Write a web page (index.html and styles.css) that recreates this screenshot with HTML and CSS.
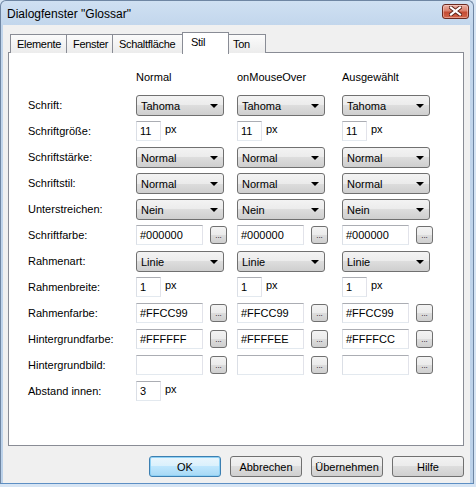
FILE: index.html
```html
<!DOCTYPE html>
<html lang="de">
<head>
<meta charset="utf-8">
<title>Dialogfenster "Glossar"</title>
<link rel="stylesheet" href="styles.css">
</head>
<body>
<div class="window">
  <div class="titlebar">
    <span class="title">Dialogfenster "Glossar"</span>
    <div class="close" aria-label="Schließen">
      <svg width="13" height="10" viewBox="0 0 13 10"><path d="M2 1.5 L11 8.5 M11 1.5 L2 8.5" stroke="#5a2016" stroke-width="4" stroke-linecap="square" fill="none"/><path d="M2 1.5 L11 8.5 M11 1.5 L2 8.5" stroke="#ffffff" stroke-width="2.2" stroke-linecap="square" fill="none"/></svg>
    </div>
  </div>
  <div class="client">
    <div class="tabs">
      <div class="tab tab-elemente">Elemente</div>
      <div class="tab tab-fenster">Fenster</div>
      <div class="tab tab-schalt">Schaltfläche</div>
      <div class="tab tab-stil active">Stil</div>
      <div class="tab tab-ton">Ton</div>
    </div>
    <div class="panel">
      <div class="grid">
        <div></div>
        <div class="head">Normal</div>
        <div class="head">onMouseOver</div>
        <div class="head">Ausgewählt</div>

        <div class="label">Schrift:</div>
        <div><div class="combo">Tahoma</div></div>
        <div><div class="combo">Tahoma</div></div>
        <div><div class="combo">Tahoma</div></div>

        <div class="label">Schriftgröße:</div>
        <div class="unit"><div class="field small">11</div><span class="px">px</span></div>
        <div class="unit"><div class="field small">11</div><span class="px">px</span></div>
        <div class="unit"><div class="field small">11</div><span class="px">px</span></div>

        <div class="label">Schriftstärke:</div>
        <div><div class="combo">Normal</div></div>
        <div><div class="combo">Normal</div></div>
        <div><div class="combo">Normal</div></div>

        <div class="label">Schriftstil:</div>
        <div><div class="combo">Normal</div></div>
        <div><div class="combo">Normal</div></div>
        <div><div class="combo">Normal</div></div>

        <div class="label">Unterstreichen:</div>
        <div><div class="combo">Nein</div></div>
        <div><div class="combo">Nein</div></div>
        <div><div class="combo">Nein</div></div>

        <div class="label">Schriftfarbe:</div>
        <div class="pair"><div class="field wide">#000000</div><div class="dots">...</div></div>
        <div class="pair"><div class="field wide">#000000</div><div class="dots">...</div></div>
        <div class="pair"><div class="field wide">#000000</div><div class="dots">...</div></div>

        <div class="label">Rahmenart:</div>
        <div><div class="combo">Linie</div></div>
        <div><div class="combo">Linie</div></div>
        <div><div class="combo">Linie</div></div>

        <div class="label">Rahmenbreite:</div>
        <div class="unit"><div class="field small">1</div><span class="px">px</span></div>
        <div class="unit"><div class="field small">1</div><span class="px">px</span></div>
        <div class="unit"><div class="field small">1</div><span class="px">px</span></div>

        <div class="label">Rahmenfarbe:</div>
        <div class="pair"><div class="field wide">#FFCC99</div><div class="dots">...</div></div>
        <div class="pair"><div class="field wide">#FFCC99</div><div class="dots">...</div></div>
        <div class="pair"><div class="field wide">#FFCC99</div><div class="dots">...</div></div>

        <div class="label">Hintergrundfarbe:</div>
        <div class="pair"><div class="field wide">#FFFFFF</div><div class="dots">...</div></div>
        <div class="pair"><div class="field wide">#FFFFEE</div><div class="dots">...</div></div>
        <div class="pair"><div class="field wide">#FFFFCC</div><div class="dots">...</div></div>

        <div class="label">Hintergrundbild:</div>
        <div class="pair"><div class="field wide"></div><div class="dots">...</div></div>
        <div class="pair"><div class="field wide"></div><div class="dots">...</div></div>
        <div class="pair"><div class="field wide"></div><div class="dots">...</div></div>

        <div class="label">Abstand innen:</div>
        <div class="unit"><div class="field small">3</div><span class="px">px</span></div>
        <div></div>
        <div></div>
      </div>
    </div>
    <div class="buttons">
      <div class="btn default">OK</div>
      <div class="btn">Abbrechen</div>
      <div class="btn">Übernehmen</div>
      <div class="btn">Hilfe</div>
    </div>
  </div>
</div>
</body>
</html>
```
FILE: styles.css
```css
html, body {
  margin: 0;
  padding: 0;
}
body {
  width: 476px;
  height: 487px;
  overflow: hidden;
  background: #d7e5f4;
  font-family: "Liberation Sans", Arial, sans-serif;
  font-size: 11px;
  color: #000;
}
.window {
  box-sizing: border-box;
  width: 474px;
  height: 484px;
  border: 1px solid #6f86a3;
  border-bottom-color: #5d8fc4;
  border-radius: 6px 6px 0 0;
  background: linear-gradient(#cfe0f2 0px, #c2d6ec 25px, #bcd2ea 100%);
  display: flex;
  flex-direction: column;
}
.titlebar {
  height: 24px;
  display: flex;
  align-items: center;
  justify-content: space-between;
  padding: 0 4px 0 6px;
}
.title {
  font-size: 12px;
  color: #000;
  margin-top: 1px;
}
.close {
  box-sizing: border-box;
  width: 27px;
  height: 15px;
  margin-top: -4px;
  border: 1px solid #6b2a20;
  border-radius: 3px;
  background: linear-gradient(#eab0a3 0%, #d9806d 45%, #c44b33 55%, #d2654b 100%);
  box-shadow: inset 0 0 0 1px rgba(255, 220, 210, 0.45);
  display: flex;
  align-items: center;
  justify-content: center;
}
.client {
  flex: 1;
  margin: 0 3px 0 2px;
  background: #f0f0f0;
  display: flex;
  flex-direction: column;
}
.tabs {
  height: 27px;
  display: flex;
  align-items: flex-end;
  padding-left: 7px;
  position: relative;
  z-index: 1;
}
.tab {
  box-sizing: border-box;
  height: 19px;
  margin-bottom: -1px;
  margin-left: -1px;
  padding: 3px 0 0 6px;
  border: 1px solid #898c95;
  border-bottom: none;
  background: linear-gradient(#fbfbfb, #ececec);
  line-height: 13px;
  letter-spacing: -0.3px;
  white-space: nowrap;
  overflow: hidden;
}
.tab:first-child {
  margin-left: 0;
}
.tab-elemente {
  width: 57px;
}
.tab-fenster {
  width: 47px;
}
.tab-schalt {
  width: 73px;
}
.tab-stil {
  width: 47px;
}
.tab-ton {
  width: 40px;
}
.tab.active {
  height: 22px;
  margin-bottom: -2px;
  margin-left: -3px;
  margin-right: -2px;
  padding: 3px 0 0 8px;
  background: #fff;
  position: relative;
  z-index: 2;
}
.panel {
  box-sizing: border-box;
  height: 394px;
  margin: 0 6px 0 5px;
  border: 1px solid #898c95;
  background: #fff;
  padding: 17px 0 0 19px;
}
.grid {
  display: grid;
  grid-template-columns: 108px 101px 105px 1fr;
  grid-template-rows: 25px;
  grid-auto-rows: 26px;
  align-items: start;
}
.head {
  line-height: 14px;
}
.label {
  line-height: 14px;
  padding-top: 3px;
}
.combo {
  box-sizing: border-box;
  width: 88px;
  height: 21px;
  border: 1px solid #707070;
  border-radius: 3px;
  background: linear-gradient(#f3f3f3 0%, #ebebeb 50%, #dddddd 50%, #cfcfcf 100%);
  display: flex;
  align-items: center;
  justify-content: space-between;
  padding: 0 5px 0 4px;
  line-height: 14px;
}
.combo::after {
  content: "";
  width: 0;
  height: 0;
  border-left: 4px solid transparent;
  border-right: 4px solid transparent;
  border-top: 4px solid #000;
}
.field {
  box-sizing: border-box;
  height: 20px;
  border: 1px solid;
  border-color: #abadb3 #e2e3ea #e3e9ef #dbdfe6;
  background: #fff;
  padding: 0 3px;
  line-height: 18px;
  white-space: nowrap;
}
.field.small {
  width: 25px;
}
.field.wide {
  width: 67px;
}
.unit {
  display: flex;
  align-items: flex-start;
  gap: 4px;
}
.px {
  line-height: 16px;
}
.pair {
  display: flex;
  align-items: flex-start;
  gap: 7px;
}
.dots {
  box-sizing: border-box;
  width: 17px;
  height: 18px;
  margin-top: 1px;
  border: 1px solid #707070;
  border-radius: 3px;
  background: linear-gradient(#f3f3f3 0%, #ebebeb 50%, #dddddd 50%, #cfcfcf 100%);
  font-size: 8px;
  line-height: 8px;
  display: flex;
  align-items: flex-end;
  justify-content: center;
  padding-bottom: 3px;
  letter-spacing: 0;
}
.buttons {
  display: flex;
  justify-content: flex-end;
  gap: 9px;
  margin: 10px 6px 0 0;
}
.btn {
  box-sizing: border-box;
  width: 72px;
  height: 21px;
  border: 1px solid #707070;
  border-radius: 3px;
  background: linear-gradient(#f2f2f2 0%, #ebebeb 50%, #dddddd 50%, #cfcfcf 100%);
  display: flex;
  align-items: center;
  justify-content: center;
  line-height: 14px;
}
.btn.default {
  border-color: #3c7fb1;
  background: linear-gradient(#eaf6fd 0%, #d9f0fc 50%, #bee6fd 50%, #a7d9f5 100%);
  box-shadow: inset 0 0 0 1px #8fd1f5;
}
```
